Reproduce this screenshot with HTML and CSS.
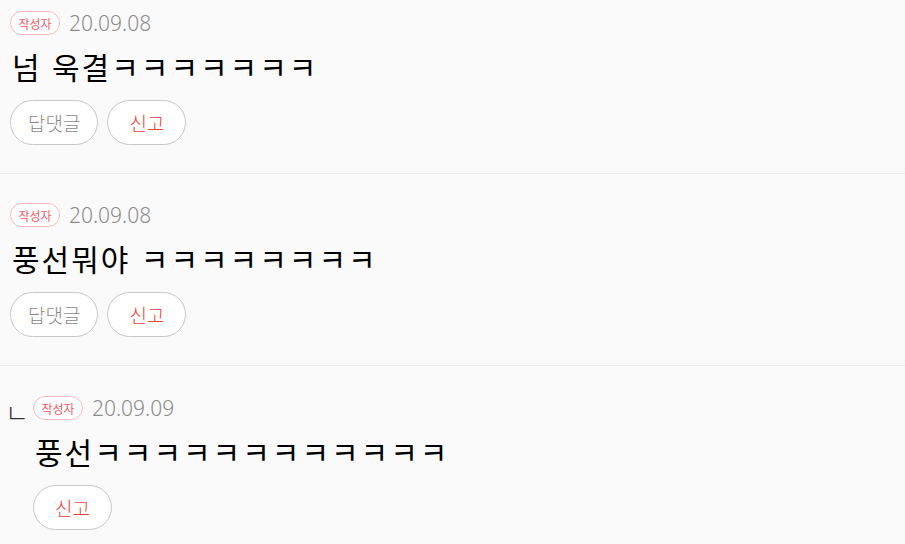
FILE: index.html
```html
<!DOCTYPE html>
<html lang="ko">
<head>
    <meta charset="UTF-8">
    <meta name="viewport" content="width=device-width, initial-scale=1.0">
    <title>댓글</title>
    <link rel="stylesheet" href="styles.css">
</head>
<body>
    <!-- Comment list -->
    <div class="comment-list">
        <div class="comment">
            <div class="comment-body">
                <div class="meta">
                    <span class="badge">작성자</span>
                    <span class="date">20.09.08</span>
                </div>
                <p class="text">넘 욱결ㅋㅋㅋㅋㅋㅋㅋ</p>
                <div class="actions">
                    <button type="button" class="btn btn-reply">답댓글</button>
                    <button type="button" class="btn btn-report">신고</button>
                </div>
            </div>
        </div>

        <div class="comment">
            <div class="comment-body">
                <div class="meta">
                    <span class="badge">작성자</span>
                    <span class="date">20.09.08</span>
                </div>
                <p class="text">풍선뭐야 ㅋㅋㅋㅋㅋㅋㅋㅋ</p>
                <div class="actions">
                    <button type="button" class="btn btn-reply">답댓글</button>
                    <button type="button" class="btn btn-report">신고</button>
                </div>
            </div>
        </div>

        <!-- Reply -->
        <div class="comment reply">
            <span class="reply-mark">ㄴ</span>
            <div class="comment-body">
                <div class="meta">
                    <span class="badge">작성자</span>
                    <span class="date">20.09.09</span>
                </div>
                <p class="text">풍선ㅋㅋㅋㅋㅋㅋㅋㅋㅋㅋㅋㅋ</p>
                <div class="actions">
                    <button type="button" class="btn btn-report">신고</button>
                </div>
            </div>
        </div>
    </div>
</body>
</html>
```

FILE: styles.css
```css
/* General reset */
* {
    margin: 0;
    padding: 0;
    box-sizing: border-box;
}

body {
    font-family: "Noto Sans CJK KR", "Noto Sans", sans-serif;
    background-color: #fafafa;
    color: #000;
    overflow: hidden;
}

/* Comment rows */
.comment {
    display: flex;
    padding: 29px 10px 28px 10px;
    border-bottom: 1px solid #ebebeb;
}

.comment:first-child {
    padding-top: 11px;
}

.comment-body {
    display: flex;
    flex-direction: column;
}

.meta {
    display: flex;
    align-items: center;
    gap: 9px;
    height: 24px;
}

.badge {
    display: inline-flex;
    align-items: center;
    justify-content: center;
    width: 50px;
    height: 24px;
    border: 1px solid #ffb8be;
    border-radius: 12px;
    color: #f25a66;
    font-size: 12px;
    background-color: #fff;
}

.date {
    font-family: "Noto Sans", sans-serif;
    font-size: 21px;
    font-weight: 300;
    color: #8a8a8a;
}

.text {
    font-size: 30px;
    font-weight: 400;
    line-height: 40px;
    margin-top: 11px;
    padding-left: 2px;
    letter-spacing: 2px;
}

.actions {
    display: flex;
    gap: 9px;
    margin-top: 14px;
}

.btn {
    font-family: "Noto Sans CJK KR", "Noto Sans", sans-serif;
    font-size: 19px;
    font-weight: 300;
    height: 45px;
    min-width: 79px;
    padding: 0 17px;
    border: 1px solid #c8c8c8;
    border-radius: 23px;
    background-color: #fff;
    cursor: pointer;
}

.btn-reply {
    color: #8a8a8a;
}

.btn-report {
    color: #e8453c;
}

/* Reply row */
.reply {
    padding-left: 5px;
    padding-top: 30px;
}

.reply-mark {
    font-size: 26px;
    font-weight: 300;
    color: #333;
    line-height: 24px;
    width: 28px;
    margin-top: 4px;
}
```
